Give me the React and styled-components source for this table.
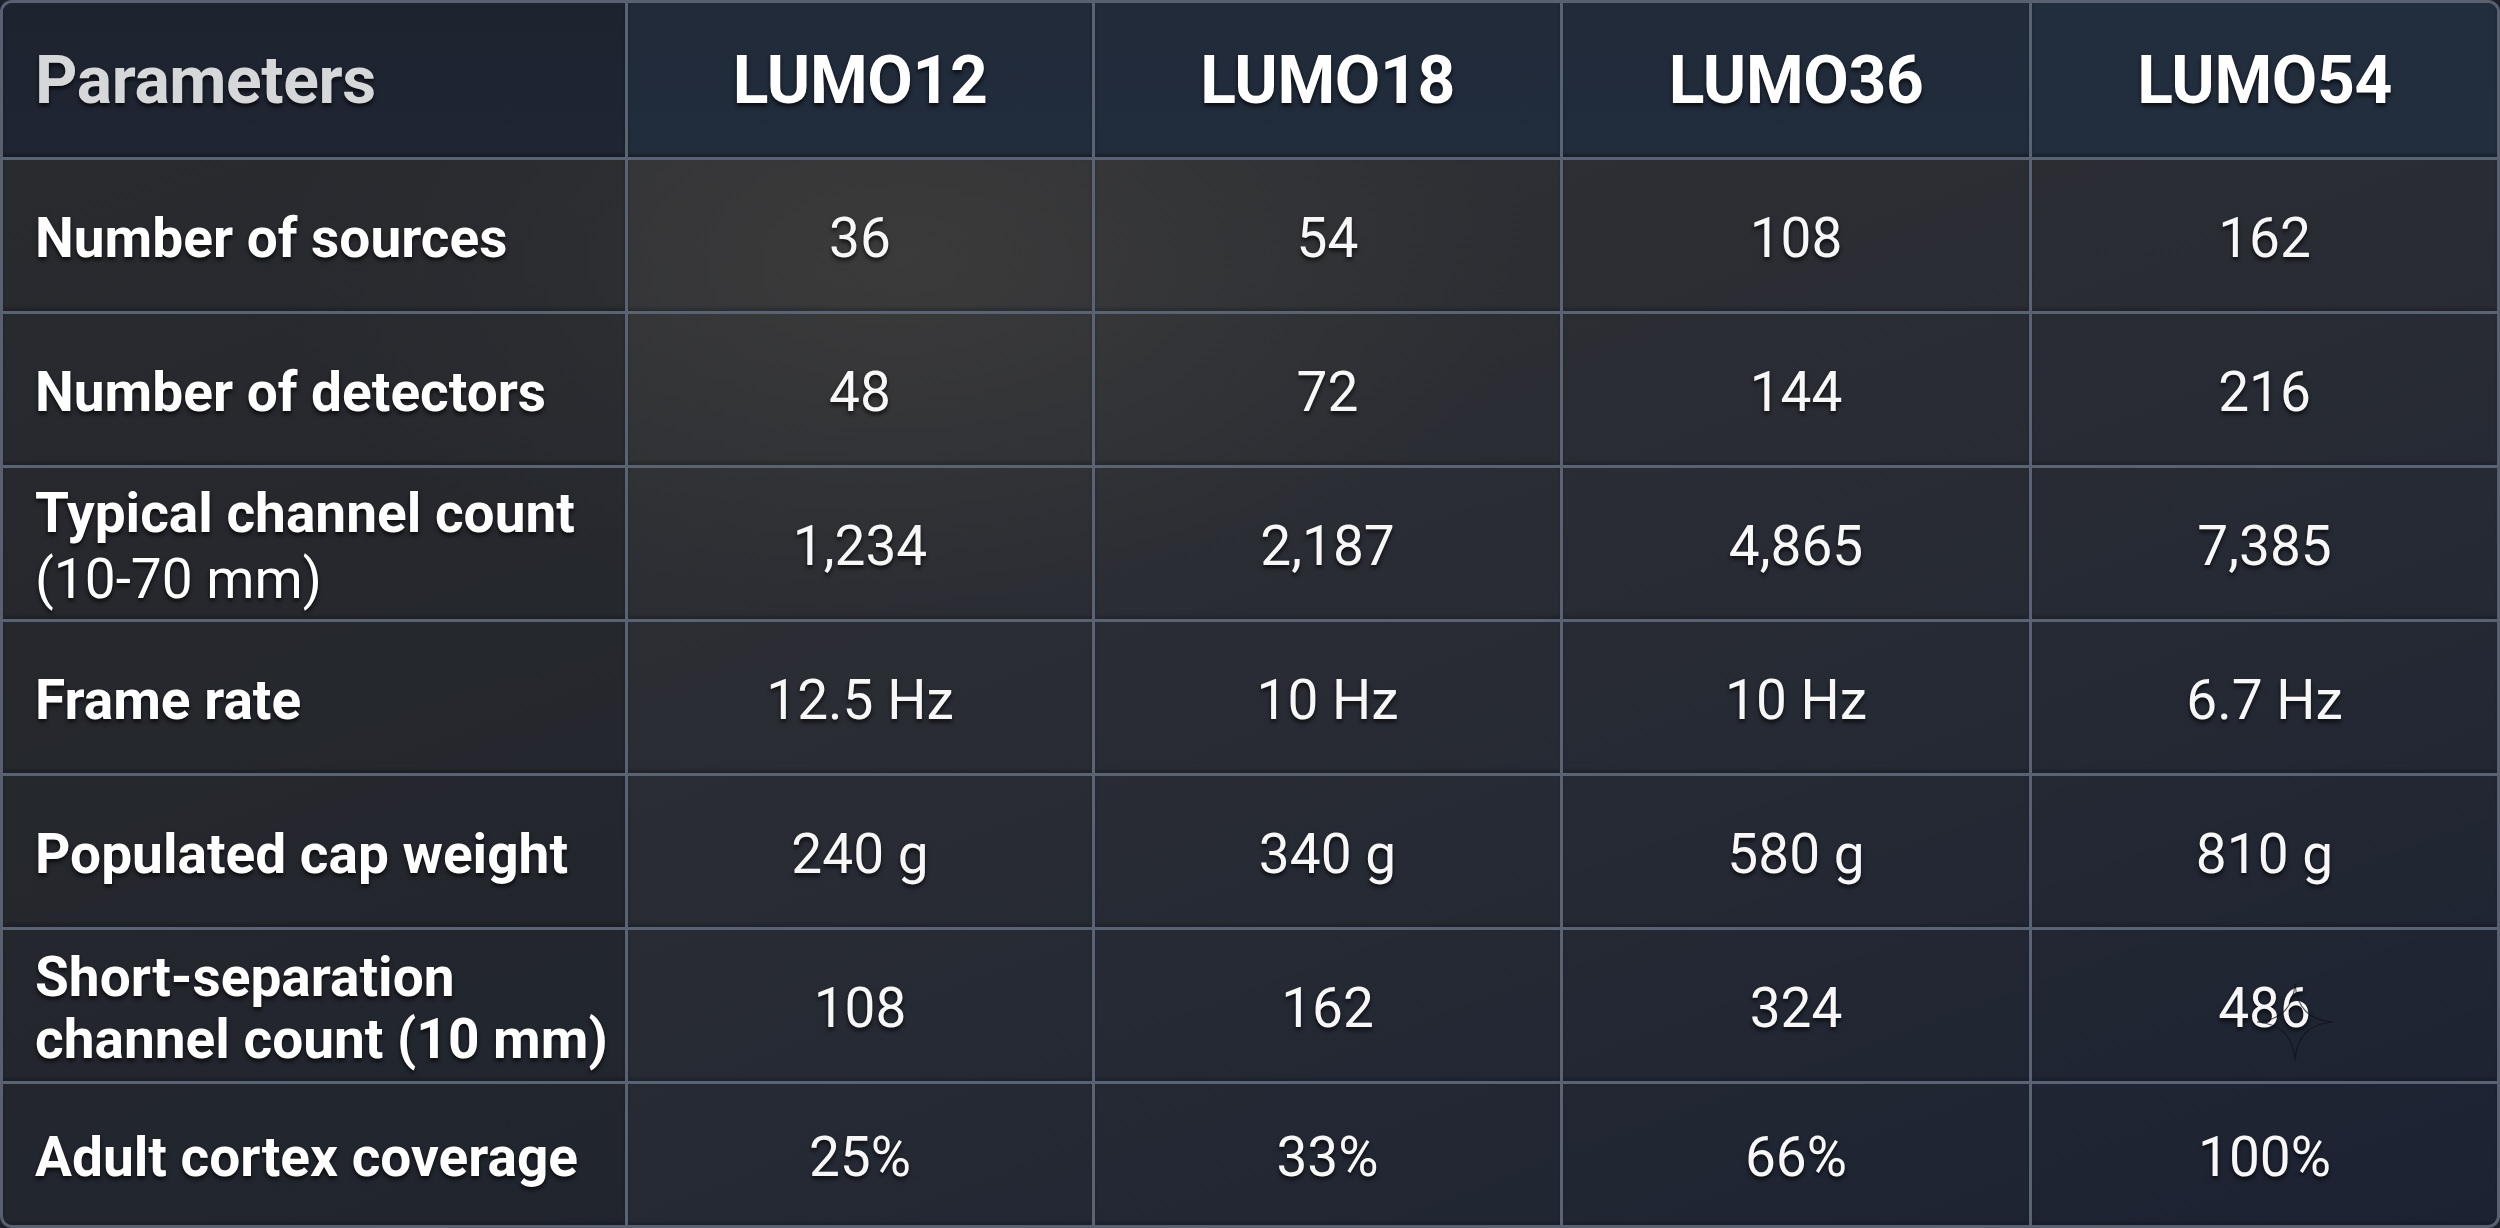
import React from 'react';
import styled, { createGlobalStyle } from 'styled-components';

const GlobalStyle = createGlobalStyle`
  html, body {
    margin: 0;
    padding: 0;
    background: #1c212b;
    overflow: hidden;
  }

  * {
    box-sizing: border-box;
  }
`;

const models = ['LUMO12', 'LUMO18', 'LUMO36', 'LUMO54'];

const rows = [
  { label: ['Number of sources'], values: ['36', '54', '108', '162'] },
  { label: ['Number of detectors'], values: ['48', '72', '144', '216'] },
  {
    label: ['Typical channel count', '(10-70 mm)'],
    values: ['1,234', '2,187', '4,865', '7,385'],
  },
  { label: ['Frame rate'], values: ['12.5 Hz', '10 Hz', '10 Hz', '6.7 Hz'] },
  {
    label: ['Populated cap weight'],
    values: ['240 g', '340 g', '580 g', '810 g'],
  },
  {
    label: ['Short-separation', 'channel count (10 mm)'],
    values: ['108', '162', '324', '486'],
    boldSecond: true,
  },
  {
    label: ['Adult cortex coverage'],
    values: ['25%', '33%', '66%', '100%'],
  },
];

export default function App() {
  return (
    <>
      <GlobalStyle />
      <Table>
        <HeaderCell $first>Parameters</HeaderCell>
        {models.map((model) => (
          <HeaderCell key={model}>{model}</HeaderCell>
        ))}

        {rows.map((row, rowIndex) => {
          const isLast = rowIndex === rows.length - 1;
          return (
            <React.Fragment key={row.label[0]}>
              <LabelCell $last={isLast}>
                <span>
                  <strong>{row.label[0]}</strong>
                  {row.label[1] &&
                    (row.boldSecond ? (
                      <strong>{row.label[1]}</strong>
                    ) : (
                      <Light>{row.label[1]}</Light>
                    ))}
                </span>
              </LabelCell>
              {row.values.map((value, i) => (
                <ValueCell
                  key={models[i]}
                  $last={isLast}
                  $end={i === models.length - 1}
                >
                  {value}
                  {rowIndex === 5 && i === 3 && <Sparkle />}
                </ValueCell>
              ))}
            </React.Fragment>
          );
        })}
      </Table>
    </>
  );
}

function Sparkle() {
  return (
    <SparkleMark viewBox="0 0 80 80" aria-hidden="true">
      <path
        d="M40 2 C42 26 54 38 78 40 C54 42 42 54 40 78 C38 54 26 42 2 40 C26 38 38 26 40 2 Z"
        fill="none"
        stroke="#0e121a"
        strokeWidth="1.2"
      />
    </SparkleMark>
  );
}

const Table = styled.div`
  display: grid;
  grid-template-columns: 625px 467px 468px 469px 1fr;
  grid-template-rows: 157px repeat(6, 154px) 1fr;
  width: 2500px;
  height: 1228px;
  border: 3px solid #596171;
  border-radius: 12px;
  overflow: hidden;
  font-family: Roboto, 'Noto Sans', sans-serif;
  color: #fff;
  background:
    radial-gradient(
      ellipse 900px 500px at 900px 260px,
      rgba(72, 70, 66, 0.5),
      rgba(72, 70, 66, 0) 70%
    ),
    linear-gradient(
      160deg,
      #323335 0%,
      #2c2e33 38%,
      #262a34 65%,
      #1c2232 100%
    );
`;

const Cell = styled.div`
  position: relative;
  display: flex;
  align-items: center;
  border-right: 3px solid #5a6373;
  border-bottom: 3px solid #5a6373;
  text-shadow: 0 3px 4px rgba(0, 0, 0, 0.7);
`;

const HeaderCell = styled(Cell)`
  justify-content: ${({ $first }) => ($first ? 'flex-start' : 'center')};
  padding-left: ${({ $first }) => ($first ? '32px' : '0')};
  font-size: 66px;
  font-weight: 700;
  letter-spacing: -0.4px;
  color: ${({ $first }) => ($first ? '#d6d7d9' : '#ffffff')};
  background: ${({ $first }) =>
    $first
      ? 'linear-gradient(180deg, #1e2330, #1f2532)'
      : 'linear-gradient(180deg, #212b3a, #212c3c)'};
  box-shadow: inset 0 -3px 3px rgba(0, 0, 0, 0.25);

  &:nth-child(5) {
    border-right: none;
    background: linear-gradient(180deg, #222d3d, #222e3e);
  }
`;

const LabelCell = styled(Cell)`
  padding-left: 32px;
  font-size: 55px;
  line-height: 62px;
  background: rgba(22, 24, 32, 0.28);
  border-bottom-width: ${({ $last }) => ($last ? '0' : '3px')};
  box-shadow: inset 0 -3px 3px rgba(0, 0, 0, 0.2);

  span {
    display: flex;
    flex-direction: column;
    padding-top: 4px;
  }

  strong {
    font-weight: 700;
  }
`;

const Light = styled.span`
  font-weight: 400;
`;

const ValueCell = styled(Cell)`
  justify-content: center;
  padding-top: 4px;
  font-size: 55px;
  font-weight: 400;
  color: #f7f7f7;
  border-right-width: ${({ $end }) => ($end ? '0' : '3px')};
  border-bottom-width: ${({ $last }) => ($last ? '0' : '3px')};
  box-shadow: inset 0 -3px 3px rgba(0, 0, 0, 0.18);
`;

const SparkleMark = styled.svg`
  position: absolute;
  left: 223px;
  top: 52px;
  width: 80px;
  height: 80px;
  opacity: 0.7;
  pointer-events: none;
`;
